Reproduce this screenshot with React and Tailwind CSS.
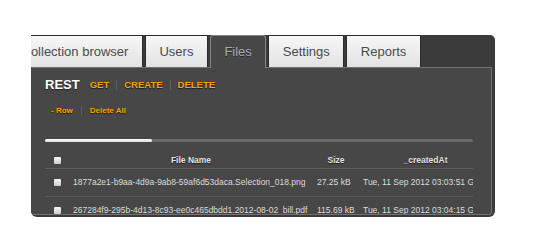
export default function App() {
  const tabs = [
    { id: "collections", label: "Collection browser" },
    { id: "users", label: "Users" },
    { id: "files", label: "Files" },
    { id: "settings", label: "Settings" },
    { id: "reports", label: "Reports" },
  ];
  const active = "files";

  const files = [
    {
      name: "1877a2e1-b9aa-4d9a-9ab8-59af6d53daca.Selection_018.png",
      size: "27.25 kB",
      created: "Tue, 11 Sep 2012 03:03:51 GMT",
    },
    {
      name: "267284f9-295b-4d13-8c93-ee0c465dbdd1.2012-08-02_bill.pdf",
      size: "115.69 kB",
      created: "Tue, 11 Sep 2012 03:04:15 GMT",
    },
  ];

  const Check = () => (
    <span className="mx-auto block h-[7px] w-[7px] rounded-[1px] bg-gradient-to-b from-[#f4f4f4] to-[#cfcfcf]" />
  );

  const Sep = ({ h = "h-[10px]" }) => (
    <span className={["block w-px bg-[#5c5c5c]", h].join(" ")} />
  );

  const orange = "font-bold text-[#f2a200] [text-shadow:0_1px_1px_#1e1e1e]";

  return (
    <div className="min-h-screen bg-white pl-[31px] pt-[35px] font-['Liberation_Sans',Arial,sans-serif]">
      <div className="flex h-[182px] w-[464px] flex-col overflow-hidden rounded-tr-[5px] rounded-b-[6px] bg-[#3b3b3b]">
        {/* tabs */}
        <div className="relative z-10 -ml-[24px] flex h-[33px] items-start gap-[2px]">
          {tabs.map((t) => {
            const isActive = t.id === active;
            return (
              <div
                key={t.id}
                className={[
                  "flex items-center whitespace-nowrap px-[13.5px] text-[13px]",
                  isActive
                    ? "h-[33px] rounded-t-[3px] border border-b-0 border-[#858585] bg-[#474747] text-[#a2acb6] [text-shadow:0_1px_0_#2a2a2a]"
                    : "h-[32px] border border-b-0 border-[#2a2a2a] bg-gradient-to-b from-[#f7f7f7] to-[#e2e2e2] text-[#4a4a4a]",
                ].join(" ")}
              >
                {t.label}
              </div>
            );
          })}
        </div>

        {/* content */}
        <div className="-mt-px mr-[3px] mb-[2px] flex flex-1 flex-col overflow-hidden rounded-br-[3px] border border-l-0 border-[#727272] bg-[#474747] pl-[14px] pr-[18px]">
          <div className="mt-[10px] flex h-[14px] items-center">
            <span className="text-[13px] font-bold text-white [text-shadow:0_1px_1px_#222]">
              REST
            </span>
            <div className="ml-[10px] flex items-center gap-[7px] text-[9.5px]">
              <span className={orange}>GET</span>
              <Sep />
              <span className={orange}>CREATE</span>
              <Sep />
              <span className={orange}>DELETE</span>
            </div>
          </div>

          <div className="mt-[14px] flex h-[10px] items-center gap-[8px] pl-[6px] text-[8px]">
            <span className={orange}>- Row</span>
            <Sep />
            <span className={orange}>Delete All</span>
          </div>

          <div className="mt-[23px] h-[4px] w-full rounded-full bg-[#6a6a6a]">
            <div className="h-full w-[107px] rounded-full bg-gradient-to-b from-white to-[#dcdcdc]" />
          </div>

          <div className="mt-[10px] w-[428px] overflow-hidden">
            <table className="w-[447px] table-fixed border-collapse text-[8.5px]">
              <colgroup>
                <col className="w-[24px]" />
                <col className="w-[244px]" />
                <col className="w-[46px]" />
                <col className="w-[133px]" />
              </colgroup>
              <thead>
                <tr className="h-[16px] border-b border-[#5e5e5e]">
                  <th className="p-0">
                    <Check />
                  </th>
                  <th className="p-0 text-center font-bold text-[#e2e2e2] [text-shadow:0_1px_1px_#1e1e1e]">
                    File Name
                  </th>
                  <th className="p-0 text-center font-bold text-[#e2e2e2] [text-shadow:0_1px_1px_#1e1e1e]">
                    Size
                  </th>
                  <th className="p-0 text-center font-bold text-[#e2e2e2] [text-shadow:0_1px_1px_#1e1e1e]">
                    _createdAt
                  </th>
                </tr>
              </thead>
              <tbody>
                {files.map((f) => (
                  <tr key={f.name} className="h-[28px] border-b border-[#585858] text-[#dcdcdc]">
                    <td className="p-0">
                      <Check />
                    </td>
                    <td className="whitespace-nowrap p-0 pl-[4px]">{f.name}</td>
                    <td className="whitespace-nowrap p-0 pl-[4px]">{f.size}</td>
                    <td className="whitespace-nowrap p-0 pl-[4px]">{f.created}</td>
                  </tr>
                ))}
              </tbody>
            </table>
          </div>
        </div>
      </div>
    </div>
  );
}
